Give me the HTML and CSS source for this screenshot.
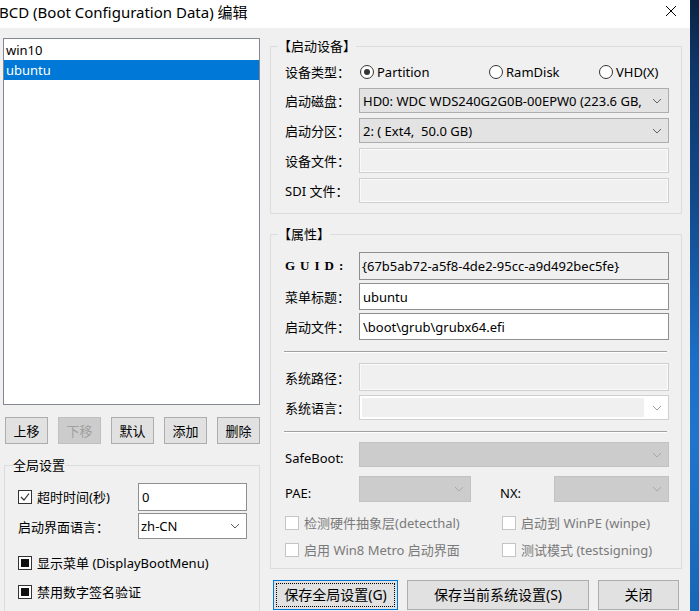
FILE: index.html
```html
<!DOCTYPE html>
<html lang="zh-CN">
<head>
    <meta charset="UTF-8">
    <title>BCD (Boot Configuration Data) 编辑</title>
    <link rel="stylesheet" href="styles.css">
</head>
<body>
    <div class="window">
        <div class="titlebar">
            <span class="title">BCD (Boot Configuration Data) 编辑</span>
            <span class="close">
                <svg width="12" height="12" viewBox="0 0 12 12"><path d="M1 1 L11 11 M11 1 L1 11" stroke="#000" stroke-width="1"/></svg>
            </span>
        </div>

        <div class="client">
            <!-- left: entries + global settings -->
            <div class="left">
                <div class="listbox">
                    <div class="item">win10</div>
                    <div class="item selected">ubuntu</div>
                </div>

                <div class="list-buttons">
                    <button class="btn">上移</button>
                    <button class="btn disabled">下移</button>
                    <button class="btn">默认</button>
                    <button class="btn">添加</button>
                    <button class="btn">删除</button>
                </div>

                <fieldset class="group global">
                    <legend>全局设置</legend>
                    <div class="g-row">
                        <label class="check"><span class="box checked"><svg width="12" height="12" viewBox="0 0 12 12"><path d="M2 6 L5 9 L10 2.5" fill="none" stroke="#333" stroke-width="1.2"/></svg></span>超时时间(秒)</label>
                        <div class="tb timeout">0</div>
                    </div>
                    <div class="g-row lang">
                        <span class="g-label">启动界面语言：</span>
                        <div class="combo white">zh-CN<svg class="arrow" width="10" height="6" viewBox="0 0 10 6"><path d="M1 1 L5 5 L9 1" fill="none" stroke="#606060"/></svg></div>
                    </div>
                    <label class="check tri-row"><span class="box tri"><span></span></span>显示菜单 (DisplayBootMenu)</label>
                    <label class="check tri-row"><span class="box tri"><span></span></span>禁用数字签名验证</label>
                </fieldset>
            </div>

            <!-- right: device + properties -->
            <div class="right">
                <fieldset class="group device">
                    <legend>【启动设备】</legend>
                    <div class="form">
                        <span class="label">设备类型：</span>
                        <div class="radios">
                            <label class="radio"><span class="dot on"></span>Partition</label>
                            <label class="radio"><span class="dot"></span>RamDisk</label>
                            <label class="radio"><span class="dot"></span>VHD(X)</label>
                        </div>

                        <span class="label">启动磁盘：</span>
                        <div class="combo">HD0: WDC WDS240G2G0B-00EPW0 (223.6 GB,<svg class="arrow" width="10" height="6" viewBox="0 0 10 6"><path d="M1 1 L5 5 L9 1" fill="none" stroke="#606060"/></svg></div>

                        <span class="label">启动分区：</span>
                        <div class="combo">2: ( Ext4,&nbsp; 50.0 GB)<svg class="arrow" width="10" height="6" viewBox="0 0 10 6"><path d="M1 1 L5 5 L9 1" fill="none" stroke="#606060"/></svg></div>

                        <span class="label">设备文件：</span>
                        <div class="tb disabled"></div>

                        <span class="label">SDI 文件：</span>
                        <div class="tb disabled"></div>
                    </div>
                </fieldset>

                <fieldset class="group props">
                    <legend>【属性】</legend>
                    <div class="form top">
                        <span class="label guid">GUID:</span>
                        <div class="tb readonly">{67b5ab72-a5f8-4de2-95cc-a9d492bec5fe}</div>

                        <span class="label">菜单标题：</span>
                        <div class="tb">ubuntu</div>

                        <span class="label">启动文件：</span>
                        <div class="tb">\boot\grub\grubx64.efi</div>
                    </div>

                    <div class="sep"></div>

                    <div class="form mid">
                        <span class="label">系统路径：</span>
                        <div class="tb disabled"></div>

                        <span class="label">系统语言：</span>
                        <div class="combo edit-off"><span class="inner"></span><svg class="arrow" width="10" height="6" viewBox="0 0 10 6"><path d="M1 1 L5 5 L9 1" fill="none" stroke="#a0a0a0"/></svg></div>
                    </div>

                    <div class="sep"></div>

                    <div class="form low">
                        <span class="label low-label">SafeBoot:</span>
                        <div class="combo off"><svg class="arrow" width="10" height="6" viewBox="0 0 10 6"><path d="M1 1 L5 5 L9 1" fill="none" stroke="#a8a8a8"/></svg></div>

                        <span class="label low-label">PAE:</span>
                        <div class="pae-row">
                            <div class="combo off pae"><svg class="arrow" width="10" height="6" viewBox="0 0 10 6"><path d="M1 1 L5 5 L9 1" fill="none" stroke="#a8a8a8"/></svg></div>
                            <span class="nx-label">NX:</span>
                            <div class="combo off nx"><svg class="arrow" width="10" height="6" viewBox="0 0 10 6"><path d="M1 1 L5 5 L9 1" fill="none" stroke="#a8a8a8"/></svg></div>
                        </div>
                    </div>

                    <div class="options">
                        <label class="check off"><span class="box"></span>检测硬件抽象层(detecthal)</label>
                        <label class="check off"><span class="box"></span>启动到 WinPE (winpe)</label>
                        <label class="check off"><span class="box"></span>启用 Win8 Metro 启动界面</label>
                        <label class="check off"><span class="box"></span>测试模式 (testsigning)</label>
                    </div>
                </fieldset>

                <div class="actions">
                    <button class="btn focus save-global">保存全局设置(G)</button>
                    <button class="btn save-sys">保存当前系统设置(S)</button>
                    <button class="btn close-btn">关闭</button>
                </div>
            </div>
        </div>
    </div>
    <div class="desktop"></div>
</body>
</html>
```

FILE: styles.css
```css
* {
    margin: 0;
    padding: 0;
    box-sizing: border-box;
    font-family: "Noto Sans", "Noto Sans CJK SC", sans-serif;
    font-size: 13px;
    color: #000;
}

body {
    display: flex;
    width: 699px;
    height: 611px;
    overflow: hidden;
    background: #f0f0f0;
}

.window {
    width: 690px;
    height: 611px;
    display: flex;
    flex-direction: column;
    overflow: hidden;
    background: #f0f0f0;
}

.desktop {
    flex: 1;
    background: linear-gradient(to bottom, #0b2242 0, #0e3566 60px, #12498a 200px, #1b6fc6 360px, #1f75cb 440px, #1866b6 611px);
}

/* title bar */
.titlebar {
    flex: none;
    height: 28px;
    background: #fff;
    display: flex;
    align-items: center;
    justify-content: space-between;
}

.title {
    font-size: 15px;
    margin-left: -1px;
    line-height: 20px;
    margin-top: -4px;
}

.close {
    width: 14px;
    height: 14px;
    margin-right: 11px;
    margin-top: -4px;
    display: flex;
}

.client {
    flex: none;
    display: flex;
    gap: 10px;
    padding-left: 3px;
}

/* left column */
.left {
    width: 257px;
}

.listbox {
    margin-top: 10px;
    height: 367px;
    border: 1px solid #828790;
    background: #fff;
    padding-top: 1px;
}

.item {
    height: 20px;
    line-height: 20px;
    padding-left: 2px;
}

.item.selected {
    background: #0078d7;
    color: #fff;
}

.list-buttons {
    display: flex;
    gap: 10px;
    margin-top: 12px;
    padding-left: 2px;
}

.btn {
    height: 27px;
    border: 1px solid #adadad;
    background: #e1e1e1;
    line-height: 18px;
}

.list-buttons .btn {
    width: 43px;
}

.btn.disabled {
    background: #cccccc;
    border-color: #bfbfbf;
    color: #a0a0a0;
}

.btn.focus {
    border-color: #0078d7;
    outline: 1px dotted #000;
    outline-offset: -4px;
}

/* group boxes */
fieldset.group {
    border: 1px solid #dcdcdc;
    min-width: 0;
}

legend {
    line-height: 18px;
    height: 18px;
    padding: 0;
}

.global {
    margin-top: 12px;
    margin-left: 1px;
    height: 170px;
    padding: 9px 12px 0 13px;
}

.global legend {
    margin-left: -5px;
}

.g-row {
    display: flex;
    justify-content: space-between;
    align-items: center;
    height: 28px;
}

.g-row.lang {
    height: 26px;
    margin-top: 2px;
}

.timeout {
    width: 109px;
    height: 28px;
}

.global .combo {
    width: 109px;
    height: 26px;
}

.check {
    display: flex;
    align-items: center;
    gap: 5px;
    line-height: 18px;
}

.tri-row {
    margin-top: 15px;
}

.tri-row + .tri-row {
    margin-top: 11px;
}

.box {
    width: 14px;
    height: 14px;
    border: 1px solid #333;
    background: #fff;
    display: flex;
    align-items: center;
    justify-content: center;
    flex: none;
}

.box.tri span {
    width: 8px;
    height: 8px;
    background: #111;
}

.check.off {
    color: #7a7a7a;
}

.check.off .box {
    border-color: #c4c4c4;
}

/* right column */
.right {
    width: 412px;
}

.device {
    margin-top: 9px;
    padding: 5px 12px 10px 14px;
}

.device legend,
.props legend {
    margin-left: -7px;
}

.form {
    display: grid;
    grid-template-columns: 74px 310px;
    align-items: center;
    row-gap: 5px;
}

.device .form {
    grid-template-rows: 23px 25px 25px 25px 25px;
}

.label {
    white-space: nowrap;
}

.guid {
    font-family: "Liberation Serif", serif;
    font-weight: bold;
    letter-spacing: 5px;
}

.radios {
    display: grid;
    grid-template-columns: 129px 110px auto;
    padding-left: 1px;
}

.radio {
    display: flex;
    align-items: center;
    gap: 3px;
}

.dot {
    width: 14px;
    height: 14px;
    border: 1px solid #333;
    border-radius: 50%;
    background: #fff;
    display: flex;
    align-items: center;
    justify-content: center;
}

.dot.on::after {
    content: "";
    width: 6px;
    height: 6px;
    border-radius: 50%;
    background: #333;
}

/* text boxes and combos */
.tb {
    height: 100%;
    border: 1px solid #8f8f8f;
    background: #fff;
    padding-left: 3px;
    display: flex;
    align-items: center;
    white-space: nowrap;
    overflow: hidden;
}

.tb.readonly {
    background: #f0f0f0;
    padding-left: 2px;
}

.tb.disabled {
    background: #f0f0f0;
    border-color: #cfcfcf;
    box-shadow: inset 0 0 0 1px #fafafa;
}

.combo {
    height: 100%;
    border: 1px solid #adadad;
    background: #e3e3e3;
    padding-left: 3px;
    padding-right: 6px;
    display: flex;
    align-items: center;
    justify-content: space-between;
    white-space: nowrap;
}

.combo.white {
    background: #fff;
    border-color: #8f8f8f;
    padding-left: 2px;
}

.combo.edit-off {
    background: #fff;
    border-color: #d0d0d0;
    padding: 2px 6px 2px 2px;
    gap: 8px;
}

.combo.edit-off .inner {
    flex: 1;
    height: 100%;
    background: #f0f0f0;
}

.combo.off {
    background: #cccccc;
    border-color: #c2c2c2;
    justify-content: flex-end;
}

/* properties group */
.props {
    margin-top: 11px;
    padding: 9px 12px 8px 14px;
}

.form.top {
    grid-template-rows: 28px 27px 27px;
    row-gap: 3px;
}

.sep {
    margin: 11px 2px 0 -1px;
    border-top: 1px solid #a0a0a0;
    border-bottom: 1px solid #fff;
}

.form.mid {
    margin-top: 10px;
    grid-template-rows: 28px 25px;
    row-gap: 4px;
}

.form.low {
    margin-top: 9px;
    grid-template-rows: 25px 26px;
    row-gap: 9px;
}

.low-label {
    padding-top: 7px;
}

.pae-row {
    display: flex;
    align-items: center;
    height: 100%;
}

.combo.pae {
    width: 112px;
}

.nx-label {
    width: 54px;
    margin-left: 29px;
    padding-top: 7px;
}

.combo.nx {
    width: 115px;
}

.options {
    display: grid;
    grid-template-columns: 217px auto;
    grid-auto-rows: 20px;
    row-gap: 7px;
    margin-top: 11px;
}

/* bottom buttons */
.actions {
    display: flex;
    gap: 9px;
    margin-top: 11px;
    padding-left: 3px;
}

.actions .btn {
    height: 30px;
    font-size: 14px;
}

.save-global {
    width: 125px;
}

.save-sys {
    width: 182px;
}

.close-btn {
    width: 81px;
}
```
